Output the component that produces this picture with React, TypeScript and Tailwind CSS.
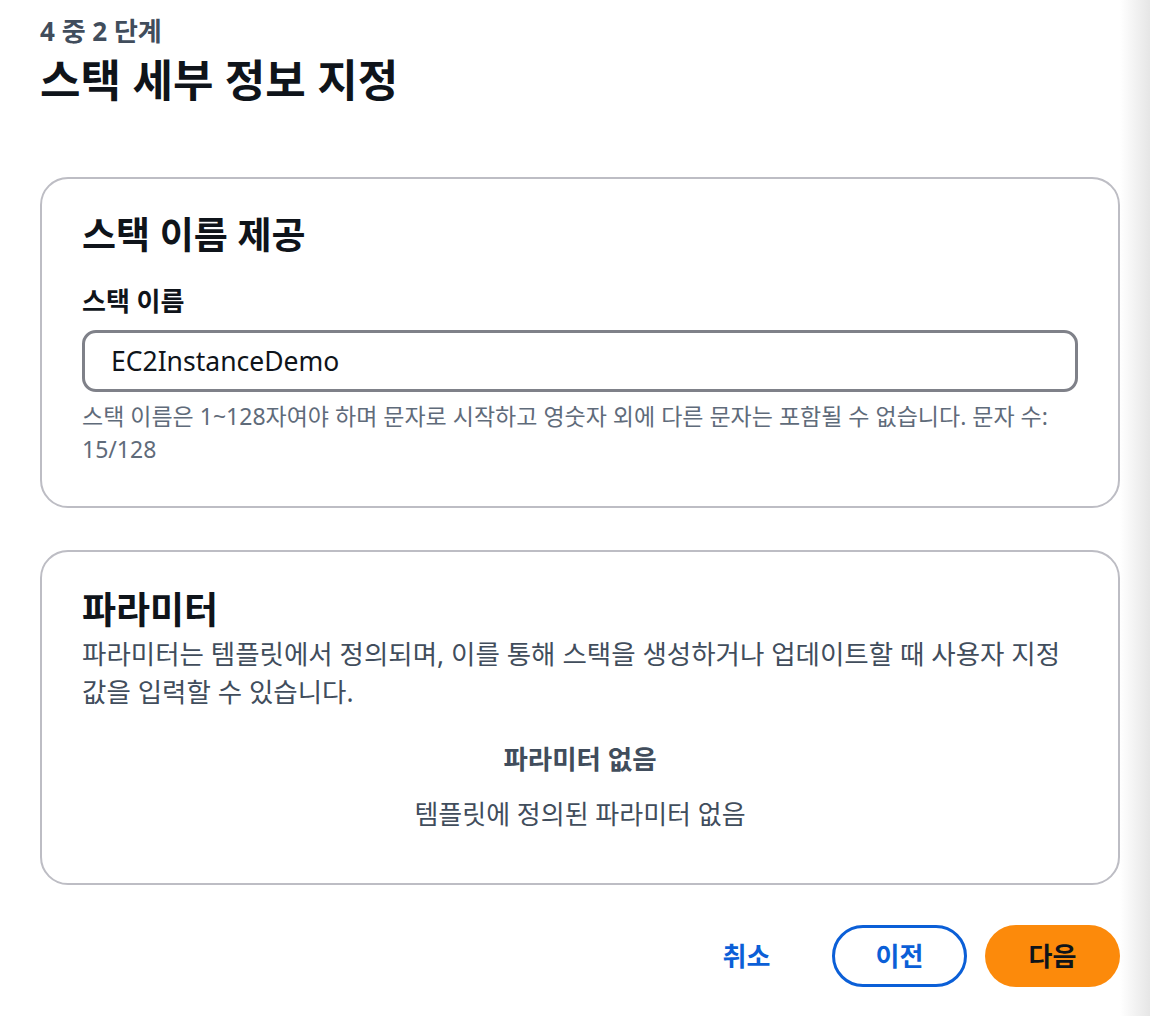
import React from "react";

const font = { fontFamily: '"Noto Sans", "Noto Sans CJK KR", sans-serif' };

export default function App() {
  return (
    <div className="flex min-h-[1016px] bg-white" style={font}>
      <div className="w-[1120px] shrink-0 pl-10">
        <p className="pt-[17px] text-[26px] leading-[28px] font-bold text-[#414d5c]">4 중 2 단계</p>
        <h1 className="mt-[9px] text-[44px] leading-[52px] font-bold text-[#0f141a]">스택 세부 정보 지정</h1>

        {/* Stack name */}
        <section className="mt-[71px] rounded-[28px] border-2 border-[#bdbdc4] px-10 pt-[35px] pb-[40px]">
          <h2 className="text-[37px] leading-[42px] font-bold text-[#0f141a]">스택 이름 제공</h2>
          <label className="mt-[29px] block text-[26px] leading-[32px] font-bold text-[#0f141a]">스택 이름</label>
          <input
            className="mt-[13px] block h-[62px] w-full rounded-[14px] border-[3px] border-[#7f8189] px-[26px] text-[26.5px] text-[#0f141a] outline-none"
            defaultValue="EC2InstanceDemo"
          />
          <p className="mt-[8px] text-[23px] leading-[33px] text-[#5f6b7a]">
            스택 이름은 1~128자여야 하며 문자로 시작하고 영숫자 외에 다른 문자는 포함될 수 없습니다. 문자 수:
            <br />
            15/128
          </p>
        </section>

        {/* Parameters */}
        <section className="mt-[42px] rounded-[28px] border-2 border-[#bdbdc4] px-10 pt-[37px] pb-[52px]">
          <h2 className="text-[37px] leading-[42px] font-bold text-[#0f141a]">파라미터</h2>
          <p className="mt-[4px] text-[26.5px] leading-[38px] text-[#414d5c]">
            파라미터는 템플릿에서 정의되며, 이를 통해 스택을 생성하거나 업데이트할 때 사용자 지정 값을 입력할 수 있습니다.
          </p>
          <div className="mt-[31px] text-center text-[#414d5c]">
            <p className="text-[26.5px] leading-[34px] font-bold">파라미터 없음</p>
            <p className="mt-[21px] text-[26px] leading-[34px]">템플릿에 정의된 파라미터 없음</p>
          </div>
        </section>

        <div className="mt-[40px] flex justify-end gap-[18px]">
          <button className="h-[62px] w-[135px] rounded-full text-[26px] font-bold text-[#0b5fd7]">취소</button>
          <button className="h-[62px] w-[135px] rounded-full border-[3px] border-[#0b5fd7] text-[26px] font-bold text-[#0b5fd7]">
            이전
          </button>
          <button className="h-[62px] w-[135px] rounded-full bg-[#fc8a0b] text-[26px] font-bold text-[#0f141a]">다음</button>
        </div>
      </div>
      <div className="w-[30px] shrink-0 bg-gradient-to-r from-white to-[#e6e6e6]" />
    </div>
  );
}
